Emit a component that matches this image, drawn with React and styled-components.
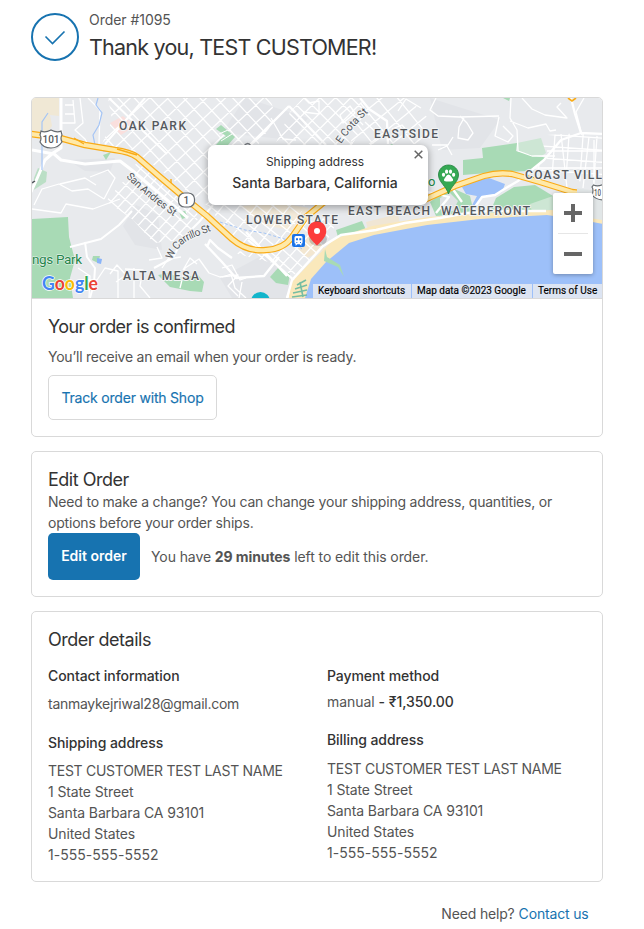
import React from "react";
import styled, { createGlobalStyle } from "styled-components";

const GlobalStyle = createGlobalStyle`
  * { box-sizing: border-box; }
  body { margin: 0; background: #fff; }
  h1, h2, h3, p { margin: 0; font-weight: 400; }
`;

const Page = styled.main`
  width: 644px;
  height: 929px;
  overflow: hidden;
  padding: 10px 41px 0 31px;
  font-family: Inter, "Noto Sans", sans-serif;
  font-size: 14px;
  line-height: 21px;
  color: #545454;
`;

const Header = styled.header`
  display: flex;
  gap: 10px;
  height: 87px;
`;

const CheckMark = styled.svg`
  display: block;
  width: 48px;
  height: 48px;
  margin-top: 3px;
`;

const OrderNumber = styled.p`
  height: 19px;
  line-height: 19px;
  letter-spacing: -0.04px;
`;

const ThankYou = styled.h1`
  margin-top: 4px;
  font-size: 21.5px;
  line-height: 28px;
  color: #333;
  letter-spacing: -0.78px;
  white-space: nowrap;
`;

const Card = styled.section`
  width: 572px;
  height: ${(p) => p.$height}px;
  margin-bottom: 14px;
  border: 1px solid #d9d9d9;
  border-radius: 5px;
  overflow: hidden;
`;

const CardBody = styled.div`
  padding: 16px 16px 0;
`;

const CardTitle = styled.h2`
  font-size: 18px;
  line-height: 24px;
  color: #333;
  letter-spacing: ${(p) => p.$track || "-0.5px"};
`;

const Text = styled.p`
  letter-spacing: ${(p) => p.$track || "-0.2px"};
  margin-top: ${(p) => p.$gap || 0}px;
  white-space: nowrap;
`;

const Strong = styled.strong`
  font-weight: ${(p) => p.$weight || 700};
  color: ${(p) => p.$color || "inherit"};
`;

const OutlineButton = styled.button`
  display: block;
  width: 169px;
  height: 45px;
  margin-top: 8px;
  padding: 0;
  border: 1px solid #d9d9d9;
  border-radius: 5px;
  background: #fff;
  color: #1773b0;
  font: 400 14px Inter, sans-serif;
  letter-spacing: -0.2px;
  -webkit-text-stroke: 0.15px #1773b0;
`;

const ActionRow = styled.div`
  display: flex;
  align-items: center;
  gap: 11px;
`;

const PrimaryButton = styled.button`
  width: 92px;
  height: 47px;
  padding: 0 0 2px;
  border: 0;
  border-radius: 5px;
  background: #1773b0;
  color: #fff;
  font: 600 14px Inter, sans-serif;
  letter-spacing: 0;
`;

const DetailGrid = styled.div`
  display: grid;
  grid-template-columns: 279px 1fr;
  margin-top: 14px;
`;

const DetailTitle = styled.h3`
  margin-top: ${(p) => p.$gap || 0}px;
  font-size: 14px;
  line-height: 19px;
  font-weight: 500;
  color: #333;
  letter-spacing: -0.08px;
`;

const Footer = styled.footer`
  display: flex;
  justify-content: flex-end;
  gap: 4px;
  margin-top: 21px;
  width: 557.5px;
  letter-spacing: -0.17px;
`;

const ContactLink = styled.a`
  color: #1773b0;
`;

const MapFrame = styled.div`
  position: relative;
  width: 570px;
  height: 201px;
  border-bottom: 1px solid #d9d9d9;
  overflow: hidden;
`;

const MapDrawing = styled.svg`
  display: block;
  width: 570px;
  height: 200px;
`;

const Popup = styled.div`
  position: absolute;
  left: 176px;
  top: 47px;
  width: 220px;
  height: 60px;
  padding: 7px 0 0;
  border-radius: 7px;
  background: #fff;
  color: #333;
  text-align: center;
  box-shadow: 0 2px 7px 1px rgba(0, 0, 0, 0.3);
`;

const PopupLabel = styled.p`
  padding-right: 6px;
  font-size: 12px;
  line-height: 20px;
  letter-spacing: -0.03px;
`;

const PopupPlace = styled.p`
  padding-right: 6px;
  font-size: 14px;
  line-height: 22px;
  font-weight: 500;
  letter-spacing: -0.05px;
`;

const CloseIcon = styled.svg`
  position: absolute;
  right: 5px;
  top: 5px;
  width: 9px;
  height: 9px;
`;

const ZoomControl = styled.div`
  position: absolute;
  left: 521px;
  top: 95px;
  width: 40px;
  height: 81px;
  display: flex;
  flex-direction: column;
  align-items: center;
  border-radius: 2px;
  background: #fff;
  box-shadow: 0 1px 4px rgba(0, 0, 0, 0.3);
`;

const ZoomButton = styled.button`
  display: flex;
  align-items: center;
  justify-content: center;
  width: 40px;
  height: 40px;
  padding: 0;
  border: 0;
  background: none;
`;

const Divider = styled.div`
  width: 30px;
  height: 1px;
  background: #e6e6e6;
`;

const Attribution = styled.div`
  position: absolute;
  right: 0;
  bottom: 0;
  height: 14px;
  display: flex;
  gap: 1px;
`;

const Legal = styled.span`
  width: ${(p) => p.$width}px;
  padding-left: 5px;
  background: rgba(232, 234, 241, 0.85);
  color: #000;
  font: 400 10px/14px Roboto, sans-serif;
  letter-spacing: ${(p) => p.$track || "0px"};
  -webkit-text-stroke: 0.15px #000;
  white-space: nowrap;
`;

const MapLabel = styled.text`
  font-family: Roboto, sans-serif;
  font-size: ${(p) => p.$size || 12}px;
  font-weight: ${(p) => p.$weight || 500};
  fill: ${(p) => p.$fill || "#54585d"};
  stroke: #f1f3f4;
  stroke-width: ${(p) => (p.$halo === undefined ? 2 : p.$halo)}px;
  stroke-linejoin: round;
  paint-order: stroke;
`;

const GoogleMark = styled.text`
  font-family: Lato, sans-serif;
  font-size: 18.5px;
  font-weight: 700;
  stroke: #fff;
  stroke-width: 1.5px;
  paint-order: stroke;
`;

/* Parallel streets running at an angle, clipped to a neighbourhood. */
function Streets({ clip, cx, cy, angle, step, cross, reach = 170 }) {
  let d = "";
  for (let v = -reach; v <= reach; v += step) d += `M${-reach} ${v}H${reach}`;
  for (let v = -reach; v <= reach; v += cross) d += `M${v} ${-reach}V${reach}`;
  return (
    <g clipPath={`url(#${clip})`}>
      <path d={d} transform={`translate(${cx} ${cy}) rotate(${angle})`} stroke="#fff" strokeWidth="1.3" fill="none" />
    </g>
  );
}

const FREEWAY_WEST =
  "M31 134 L60 138 L85 145 L115 150 Q130 152 137 157 L160 177 L180 194 L207 216 L232 239 Q247 252 266 250 Q284 249 292 237 L306 217 L323 203 L345 190";
const FREEWAY_EAST = "M424 200 L455 186 L484 176 Q498 172 512 174 L540 182 L572 192 L604 196";

function Map() {
  return (
    <MapDrawing viewBox="32 98 570 200">
      <defs>
        <clipPath id="uptown"><path d="M108 98H270L276 118 258 145H220V205H205L160 170 137 152 102 144 112 120Z" /></clipPath>
        <clipPath id="midtown"><path d="M303 98H358L370 113 352 145H275L290 112Z" /></clipPath>
        <clipPath id="westside"><path d="M137 162L200 216 184 240 154 243 132 219 106 201 128 176Z" /></clipPath>
        <clipPath id="lower"><path d="M207 205H305L290 234Q282 247 260 246 242 247 230 234Z" /></clipPath>
        <clipPath id="beachside"><path d="M286 248L309 218 338 219 327 242 291 278 273 263 230 252Z" /></clipPath>
        <clipPath id="east"><path d="M362 98L350 144H430V120L408 98Z" /></clipPath>
        <clipPath id="coastal"><path d="M546 135L583 133 602 137V183L562 180 526 165Z" /></clipPath>
      </defs>
      <rect x="32" y="98" width="570" height="200" fill="#e8eaed" />
      <path d="M32 98H59V116L50 115 52 126 46 134 32 132Z" fill="#f0e8d5" />
      <g fill="#e2e4e8">
        <path d="M68 160L115 158 110 172 85 171Z" />
        <path d="M136 205L158 215 162 250 135 245 123 226Z" />
        <path d="M245 98L308 118 293 140 222 133Z" />
        <path d="M430 98L500 120 480 148 442 150Z" />
        <path d="M220 278L265 254 292 280 286 298H232Z" />
      </g>
      <path d="M110 123L123 116 135 126 121 135Z" fill="#fadfdd" />
      <path d="M240 206L280 203 309 208 296 231 263 225Z" fill="#f3ead9" />
      <path d="M288 239L314 235 325 249 307 258Z" fill="#f3e7d1" />

      <Streets clip="uptown" cx={220} cy={140} angle={47} step={12} cross={13} />
      <Streets clip="midtown" cx={320} cy={120} angle={45} step={11} cross={11} />
      <Streets clip="westside" cx={170} cy={202} angle={42} step={11} cross={9} />
      <Streets clip="lower" cx={255} cy={230} angle={39} step={10} cross={13} />
      <Streets clip="beachside" cx={290} cy={256} angle={42} step={10} cross={10} />
      <Streets clip="east" cx={390} cy={130} angle={51} step={16} cross={14} />
      <Streets clip="coastal" cx={570} cy={150} angle={4} step={12} cross={14} />

      <g fill="#a8dab5">
        <path d="M32 219L68 217 69 237 75 260 70 278 73 298H32Z" />
        <path d="M34 178L38 168 47 172 46 182 32 191Z" opacity=".7" />
        <path d="M216 129L221 125 235 137 228 145H216L221 139 226 136Z" />
        <path d="M158 275L170 273 178 278 198 275 204 282 202 292 190 291 170 287Z" />
        <path d="M93 256H100L98 263 92 260ZM103 155L111 152 106 160ZM179 212L185 211 188 217 182 219Z" />
        <path d="M270 277L278 268 290 274 288 285 276 283Z" />
        <path d="M336 230L362 221 366 230 338 237Z" />
        <path d="M463 160L483 158 482 148 517 143 516 151 547 158 530 171 500 172 463 175Z" />
        <path d="M430 202L450 187 470 196 474 213 436 216Z" />
        <path d="M489 215L496 198 514 187 535 185 553 196V214Z" />
        <path d="M388 146L392 144 395 147 390 149Z" />
        <path d="M503 98H510L509 101Z" />
      </g>
      <path d="M219 134L228 130M221 141L232 134" stroke="#fff" strokeWidth="1" />
      <path d="M366 222L398 214 400 224 368 230Z" fill="#f0e6d4" />
      <path d="M97 258L102 259 101 264 97 263Z" fill="#8ab4f8" />
      <path d="M517 143L541 138 546 153 540 157 517 151Z" fill="#cde6d4" />
      <path d="M530 204L553 196V214L533 216Z" fill="#cde6d4" />
      <path d="M440 198L450 193 458 201 453 211 440 209Z" fill="#dfe2e5" />
      <path d="M462 187L474 181 489 178 505 184 502 192 491 196 481 197 474 211 470 209 477 196 466 194Z" fill="#9dc0f9" />

      <g stroke="#fff" strokeWidth="1.3" fill="none" strokeLinejoin="round">
        <path d="M61 98V135M61 123H75L73 100M80 98L83 123 75 130 85 139 89 147M88 98L100 110 99 144M65 105H73M65 114H74" />
        <path d="M32 209L61 213 66 204 93 209 120 199M34 205L42 189 59 184 72 191 88 189 104 199M60 184L85 178 96 185M90 177L108 170 115 178 104 199" />
        <path d="M78 268L90 276 89 298M82 280H97L105 268 118 271 118 298M110 274L117 265 126 275 116 282M125 269L143 270 140 286 150 298M134 268V298M149 260L162 258 157 247M180 288L185 268 199 259 209 273 220 277 238 275 228 286 238 296M197 264L190 258 183 270M162 268L168 259 181 257" />
        <path d="M222 268L232 265 240 280 246 278M222 277L231 274 235 288 246 298M239 298L242 282" />
        <path d="M304 98L309 103 319 101V114L303 112M271 118L283 139 296 140M340 115L350 106 355 113 343 123ZM365 122L381 137 370 145M398 111L406 99 421 108M392 129L402 125 409 133" />
        <path d="M436 98L430 110 438 116 460 117 499 116M460 116L467 123 473 133 468 140 458 138 459 127 464 118M499 117L495 136 508 142 513 136 503 126M511 98L510 118 517 130 518 151 532 156 555 156M510 121L528 128 546 124 550 131 556 130M522 98L532 109 545 115 567 118 557 107 561 103M432 145H448L453 137M438 150L447 146 452 155" />
        <path d="M584 98L576 112 582 135M589 137L583 188M594 140V190M547 151L602 151M533 168H602M561 134L567 188" />
      </g>
      <g stroke="#fff" strokeWidth="3" fill="none" strokeLinejoin="round">
        <path d="M61 98V148L53 153 61 160 85 164 120 161 133 171 188 218M53 153L45 160 36 181 31 192M32 150L54 154" />
        <path d="M109 98L167 154M70 247L101 239 119 225 132 211M145 98L105 144" strokeWidth="2" />
        <path d="M85 242L87 257 95 268 94 283 90 298M154 268L173 258 183 238 199 222 213 205" strokeWidth="2" />
        <path d="M205 244L222 262 236 278 264 276 279 257M207 247L210 240 218 248 232 258M248 240L295 281 287 298M246 232L287 276M289 106L250 145M289 106L326 145M360 98L369 109 387 121 388 144" strokeWidth="2.3" />
        <path d="M571 98L575 114 581 133 603 134M581 133L561 140 544 160 518 181 506 188 495 195 482 197 472 211M428 192L449 197 436 213M447 181L462 202" strokeWidth="2.3" />
      </g>
      <path d="M98 98L96 105 102 113 99 125 93 135 95 145M103 151L133 153 141 163 153 168 159 177 172 185M48 113L42 122V170" stroke="#a5c5f5" strokeWidth="1.2" fill="none" />
      <path d="M220 222L245 230 264 233 291 241 302 249" stroke="#a5c5f5" strokeWidth="1" strokeDasharray="3 2" fill="none" />

      <path d="M289 298L290 284 307 266 334 239 372 226 428 217 489 213 552 210 602 218V298Z" fill="#fae8bb" />
      <path d="M305 298L311 279 326 262 349 243 374 235 427 225 480 219 547 215 587 221 603 224V298Z" fill="#9dc0f9" />
      <path d="M287 298L292 280 323 246 341 235 376 230 405 223 440 218 467 213 490 211 546 211" stroke="#fff" strokeWidth="2.4" fill="none" />
      <path d="M325 249L327 257 340 265 344 277 338 267 324 261Z" fill="#a8dab5" />
      <path d="M297 285L306 280M295 289L307 285M293 293L307 290M292 297L307 295M300 282L303 297" stroke="#76bda2" strokeWidth="1.600" fill="none" />

      {[FREEWAY_WEST, FREEWAY_EAST].map((d) => (
        <g key={d} fill="none" strokeLinejoin="round">
          <path d={d} stroke="#f9ab17" strokeWidth="6.5" />
          <path d={d} stroke="#ffe9a8" strokeWidth="4.2" />
        </g>
      ))}
      <path d="M74 138L84 144M117 149L137 155M171 183V179" stroke="#f9ab17" strokeWidth="1.4" />
      <path d="M568 98L572 101 576 98" stroke="#f9ab17" strokeWidth="1.600" fill="none" />
      <path d="M577 188L602 192V220L577 216Z" fill="#e1e6e7" />

      <g stroke="#666b70" fill="#fff" strokeWidth="1.2">
        <path d="M41 131Q45 133 51 130 57 133 61 131L62 135Q60 138 62 142 58 148 51 148 43 148 40 142 42 138 40 135Z" />
        <rect x="178.500" y="193" width="16" height="14" rx="6" />
        <path d="M593.500 185Q598 187 604 184V200Q596 200 592 195 594 190 592 187Z" />
      </g>
      <MapLabel x="42.500" y="143" $size={10} $halo={0} textLength="17">101</MapLabel>
      <MapLabel x="183.500" y="203.500" $size={10} $halo={0}>1</MapLabel>
      <MapLabel x="594" y="196" $size={9} $halo={0} textLength="7" lengthAdjust="spacingAndGlyphs">10</MapLabel>
      <path d="M244 146Q248 141 251 146" stroke="#777b80" strokeWidth="1.400" fill="none" />

      <MapLabel x="119" y="130" textLength="67">OAK PARK</MapLabel>
      <MapLabel x="374" y="138" textLength="64">EASTSIDE</MapLabel>
      <MapLabel x="525" y="179" textLength="77">COAST VILL</MapLabel>
      <MapLabel x="246" y="224" textLength="92">LOWER STATE</MapLabel>
      <MapLabel x="348" y="215" textLength="82">EAST BEACH</MapLabel>
      <MapLabel x="441" y="215" textLength="89">WATERFRONT</MapLabel>
      <MapLabel x="123" y="280" textLength="76">ALTA MESA</MapLabel>
      <MapLabel x="32" y="264" $size={13.5} $weight={400} $fill="#238649" $halo={1} textLength="50">ngs Park</MapLabel>
      <MapLabel x="428" y="185.500" $size={13} $weight={400} $fill="#238649">o</MapLabel>

      <path id="andres" d="M126 177Q147 198 176 218" fill="none" />
      <path id="carrillo" d="M172 260Q176 248 187 241 196 236 214 230" fill="none" />
      <path id="cota" d="M341 144Q352 127 370 111" fill="none" />
      <MapLabel $size={10.5} $weight={400}><textPath href="#andres" textLength="62">San Andres St</textPath></MapLabel>
      <MapLabel $size={10.5} $weight={400}><textPath href="#carrillo" textLength="51">W Carrillo St</textPath></MapLabel>
      <MapLabel $size={10.5} $weight={400}><textPath href="#cota" textLength="42">E Cota St</textPath></MapLabel>
      <path d="M32 183L35 181" stroke="#54585d" strokeWidth="1.5" />

      <circle cx="260.500" cy="301.500" r="9.500" fill="#12b5cb" />
      <rect x="292" y="234" width="13" height="13" rx="2" fill="#1a73e8" />
      <path d="M296 236h5q1.500 0 1.500 1.500v5q0 1-1.500 1.500l1 1.200h-1.400l-.8-1h-2.600l-.8 1H295l1-1.200q-1.500-.5-1.500-1.500v-5q0-1.500 1.500-1.500Z" fill="#fff" />
      <path d="M296 238.300h2v2h-2zM299.300 238.300h2v2h-2zM296.300 242h1v1h-1zM300 242h1v1h-1z" fill="#1a73e8" />

      <ellipse cx="318" cy="239" rx="9" ry="7" fill="#000" opacity=".18" />
      <path d="M317 221.500C311.300 221.500 307.700 225.700 307.700 231 307.700 236.500 312 240.500 317 245.500 322 240.500 326.300 236.500 326.300 231 326.300 225.700 322.700 221.500 317 221.500Z" fill="#fc3c3b" />
      <circle cx="317" cy="231" r="3" fill="#fff" />

      <path d="M448.500 165C442.700 165 438.500 169.500 438.500 175 438.500 182 446.500 186.500 448.500 194 450.500 186.500 458.500 182 458.500 175 458.500 169.500 454.300 165 448.500 165Z" fill="#34a853" stroke="#20803c" strokeWidth=".8" />
      <g fill="#fff">
        <ellipse cx="443.500" cy="174.700" rx="1.600" ry="2" />
        <ellipse cx="446.600" cy="171.700" rx="1.600" ry="2.100" />
        <ellipse cx="450.500" cy="171.700" rx="1.600" ry="2.100" />
        <ellipse cx="453.600" cy="174.700" rx="1.600" ry="2" />
        <path d="M448.500 174.500Q450.200 174.500 451.500 177L453 179.300Q453.500 181.500 450.700 181.500H446.300Q443.500 181.500 444.100 179.300L445.600 177Q446.800 174.500 448.500 174.500Z" />
      </g>

      <GoogleMark x="42" y="290" textLength="56" lengthAdjust="spacingAndGlyphs">
        <tspan fill="#4285f4">G</tspan><tspan fill="#ea4335">o</tspan><tspan fill="#fbbc04">o</tspan><tspan fill="#4285f4">g</tspan><tspan fill="#34a853">l</tspan><tspan fill="#ea4335">e</tspan>
      </GoogleMark>
    </MapDrawing>
  );
}

const ADDRESS = ["TEST CUSTOMER TEST LAST NAME", "1 State Street", "Santa Barbara CA 93101", "United States", "1-555-555-5552"];

function Address({ gap }) {
  return ADDRESS.map((line, i) => (
    <Text key={line} $gap={i === 0 ? gap : 0} $track={i === 0 ? "-0.28px" : i === 4 ? "0.03px" : "-0.12px"}>{line}</Text>
  ));
}

export default function App() {
  return (
    <>
      <GlobalStyle />
      <Page>
        <Header>
          <CheckMark viewBox="0 0 48 48" fill="none" stroke="#1773b0">
            <circle cx="24" cy="24" r="23" strokeWidth="2" />
            <path d="M14.500 23.500L21.500 30.500 33.500 18.500" strokeWidth="1.600" />
          </CheckMark>
          <div>
            <OrderNumber>Order #1095</OrderNumber>
            <ThankYou>Thank you, TEST CUSTOMER!</ThankYou>
          </div>
        </Header>

        <Card $height={340}>
          <MapFrame>
            <Map />
            <Popup>
              <PopupLabel>Shipping address</PopupLabel>
              <PopupPlace>Santa Barbara, California</PopupPlace>
              <CloseIcon viewBox="0 0 9 9"><path d="M.7.7l7.600 7.600M8.300.7L.7 8.300" stroke="#666" strokeWidth="1.500" /></CloseIcon>
            </Popup>
            <ZoomControl>
              <ZoomButton aria-label="Zoom in">
                <svg width="18" height="18"><path d="M0 9H18M9 0V18" stroke="#666" strokeWidth="4" /></svg>
              </ZoomButton>
              <Divider />
              <ZoomButton aria-label="Zoom out">
                <svg width="18" height="18"><path d="M0 9H18" stroke="#666" strokeWidth="4" /></svg>
              </ZoomButton>
            </ZoomControl>
            <Attribution>
              <Legal $width={98} $track="0.02px">Keyboard shortcuts</Legal>
              <Legal $width={120}>Map data ©2023 Google</Legal>
              <Legal $width={69}>Terms of Use</Legal>
            </Attribution>
          </MapFrame>
          <CardBody>
            <CardTitle $track="-0.6px">Your order is confirmed</CardTitle>
            <Text $gap={7} $track="-0.24px">You’ll receive an email when your order is ready.</Text>
            <OutlineButton>Track order with Shop</OutlineButton>
          </CardBody>
        </Card>

        <Card $height={146}>
          <CardBody>
            <CardTitle>Edit Order</CardTitle>
            <Text $gap={-1}>Need to make a change? You can change your shipping address, quantities, or</Text>
            <Text>options before your order ships.</Text>
            <ActionRow>
              <PrimaryButton>Edit order</PrimaryButton>
              <Text $track="-0.09px">You have <Strong>29 minutes</Strong> left to edit this order.</Text>
            </ActionRow>
          </CardBody>
        </Card>

        <Card $height={271}>
          <CardBody>
            <CardTitle>Order details</CardTitle>
            <DetailGrid>
              <div>
                <DetailTitle>Contact information</DetailTitle>
                <Text $gap={8} $track="-0.27px">tanmaykejriwal28@gmail.com</Text>
                <DetailTitle $gap={19}>Shipping address</DetailTitle>
                <Address gap={8} />
              </div>
              <div>
                <DetailTitle>Payment method</DetailTitle>
                <Text $gap={6} $track="-0.04px">manual <Strong $weight={500} $color="#333">- ₹1,350.00</Strong></Text>
                <DetailTitle $gap={18}>Billing address</DetailTitle>
                <Address gap={9} />
              </div>
            </DetailGrid>
          </CardBody>
        </Card>

        <Footer>
          <span>Need help?</span>
          <ContactLink>Contact us</ContactLink>
        </Footer>
      </Page>
    </>
  );
}
